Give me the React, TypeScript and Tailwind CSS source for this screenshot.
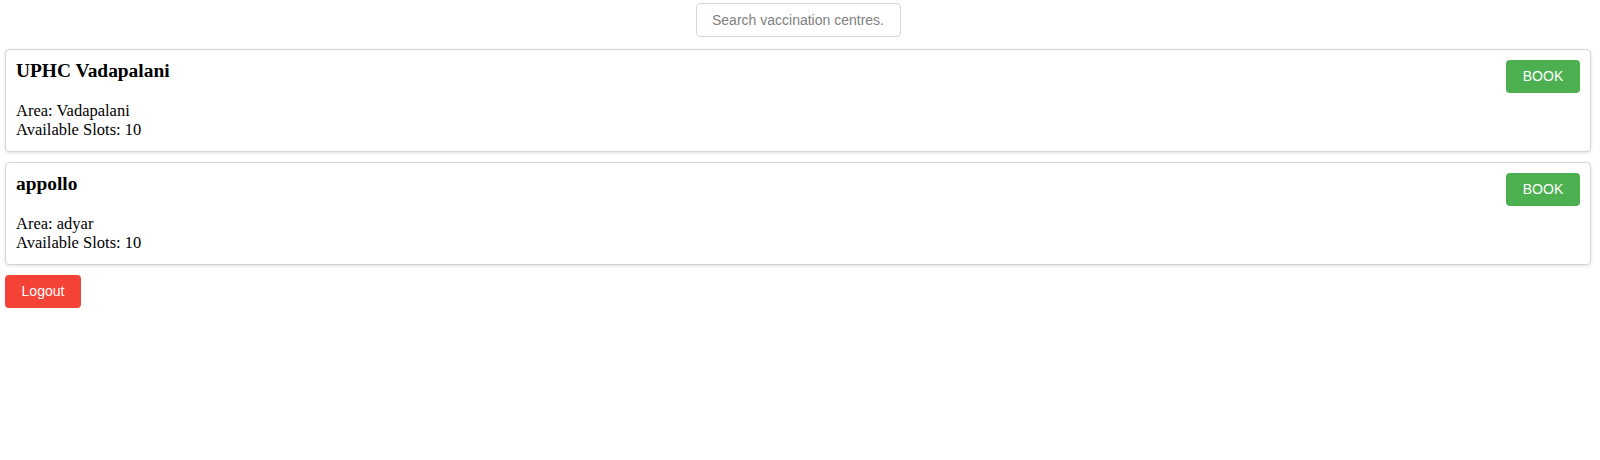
import React, { useState } from 'react';

type Centre = { id: number; name: string; area: string; slots: number };

const centres: Centre[] = [
  { id: 1, name: 'UPHC Vadapalani', area: 'Vadapalani', slots: 10 },
  { id: 2, name: 'appollo', area: 'adyar', slots: 10 },
];

const App = () => {
  const [query, setQuery] = useState('');

  const filtered = centres.filter((c) =>
    c.name.toLowerCase().includes(query.toLowerCase()) ||
    c.area.toLowerCase().includes(query.toLowerCase())
  );

  return (
    <div className="min-h-screen bg-white pl-[5px] pr-[9px] pt-[3px] font-['Liberation_Serif',serif] text-black">
      {/* Search */}
      <div className="flex justify-center mb-[12px]">
        <input
          type="text"
          value={query}
          onChange={(e) => setQuery(e.target.value)}
          placeholder="Search vaccination centres."
          className="w-[205px] h-[34px] px-[10px] border border-[#d6d6d6] rounded-[4px] text-center text-[14px] font-['Liberation_Sans',Arial,sans-serif] placeholder:text-[#808080] outline-none"
        />
      </div>

      {/* Centre cards */}
      {filtered.map((centre) => (
        <div
          key={centre.id}
          className="border border-[#d4d4d4] rounded-[4px] shadow-[0_1px_3px_rgba(0,0,0,0.12)] px-[10px] pt-[10px] pb-[12px] mb-[10px]"
        >
          <div className="flex justify-between items-start">
            <h3 className="text-[19.4px] leading-[22px] font-bold mb-[19px]">{centre.name}</h3>
            <button className="w-[74px] h-[33px] bg-[#4caf50] text-white text-[14px] rounded-[4px] font-['Liberation_Sans',Arial,sans-serif]">
              BOOK
            </button>
          </div>
          <p className="text-[16.5px] leading-[19px]">Area: {centre.area}</p>
          <p className="text-[16.5px] leading-[19px]">Available Slots: {centre.slots}</p>
        </div>
      ))}

      <button className="w-[76px] h-[33px] bg-[#f44336] text-white text-[14px] rounded-[4px] font-['Liberation_Sans',Arial,sans-serif]">
        Logout
      </button>
    </div>
  );
};

export default App;
